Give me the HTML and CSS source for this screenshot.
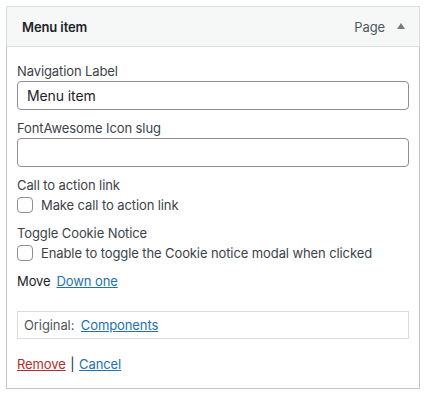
FILE: index.html
```html
<!DOCTYPE html>
<html lang="en">
<head>
    <meta charset="UTF-8">
    <meta name="viewport" content="width=device-width, initial-scale=1.0">
    <title>Menu item</title>
    <link rel="stylesheet" href="styles.css">
</head>
<body>
    <div class="menu-item">
        <div class="item-handle">
            <span class="item-title">Menu item</span>
            <span class="item-controls">
                <span class="item-type">Page</span>
                <span class="item-toggle"></span>
            </span>
        </div>

        <div class="item-settings">
            <label class="field">
                <span class="field-label">Navigation Label</span>
                <input type="text" class="text-input" value="Menu item">
            </label>

            <label class="field">
                <span class="field-label">FontAwesome Icon slug</span>
                <input type="text" class="text-input" value="">
            </label>

            <div class="field">
                <span class="field-label">Call to action link</span>
                <label class="check-row">
                    <input type="checkbox" class="check">
                    <span>Make call to action link</span>
                </label>
            </div>

            <div class="field">
                <span class="field-label">Toggle Cookie Notice</span>
                <label class="check-row">
                    <input type="checkbox" class="check">
                    <span>Enable to toggle the Cookie notice modal when clicked</span>
                </label>
            </div>

            <div class="move-row">
                <span>Move</span>
                <a href="#" class="link">Down one</a>
            </div>

            <div class="original">
                Original: <a href="#" class="link">Components</a>
            </div>

            <div class="actions">
                <a href="#" class="link link-delete">Remove</a>
                <span class="sep">|</span>
                <a href="#" class="link">Cancel</a>
            </div>
        </div>
    </div>
</body>
</html>
```

FILE: styles.css
```css
* {
    margin: 0;
    padding: 0;
    box-sizing: border-box;
}

body {
    font-family: Inter, "Noto Sans", sans-serif;
    font-size: 13px;
    line-height: 20px;
    letter-spacing: -0.1px;
    color: #1d2327;
    background: #fff;
    padding: 6px;
}

.menu-item {
    width: 414px;
}

.item-handle {
    display: flex;
    justify-content: space-between;
    align-items: center;
    background: #f6f7f7;
    border: 1px solid #dcdcde;
    padding: 10px 15px;
    height: 41px;
}

.item-title {
    font-weight: 600;
    font-size: 13px;
}

.item-controls {
    display: flex;
    align-items: center;
    gap: 12px;
    margin-right: -1px;
}

.item-type {
    color: #50575e;
}

.item-toggle {
    width: 0;
    height: 0;
    border-left: 4px solid transparent;
    border-right: 4px solid transparent;
    border-bottom: 6px solid #787c82;
    margin-bottom: 2px;
}

.item-settings {
    border: 1px solid #c3c4c7;
    border-top: none;
    padding: 14px 10px 14px;
}

.field {
    display: block;
    margin-bottom: 8px;
}

.field-label {
    display: block;
    color: #3c434a;
}

.text-input {
    display: block;
    width: 100%;
    height: 29px;
    border: 1px solid #8c8f94;
    border-radius: 4px;
    padding: 0 9px;
    font-family: inherit;
    font-size: 14px;
    letter-spacing: inherit;
    color: #1d2327;
    background: #fff;
}

.check-row {
    display: flex;
    align-items: center;
    gap: 8px;
    color: #3c434a;
}

.check {
    appearance: none;
    width: 16px;
    height: 16px;
    border: 1px solid #8c8f94;
    border-radius: 4px;
    background: #fff;
}

.move-row {
    display: flex;
    gap: 6px;
    margin-top: 8px;
    color: #1d2327;
}

.link {
    color: #2271b1;
    text-decoration: underline;
}

.link-delete {
    color: #b32d2e;
}

.original {
    margin-top: 20px;
    border: 1px solid #dcdcde;
    padding: 3px 6px;
    color: #50575e;
    word-spacing: 3px;
}

.original .link {
    word-spacing: 0;
}

.actions {
    margin-top: 15px;
    color: #1d2327;
}

.sep {
    margin: 0 1px;
}
```
